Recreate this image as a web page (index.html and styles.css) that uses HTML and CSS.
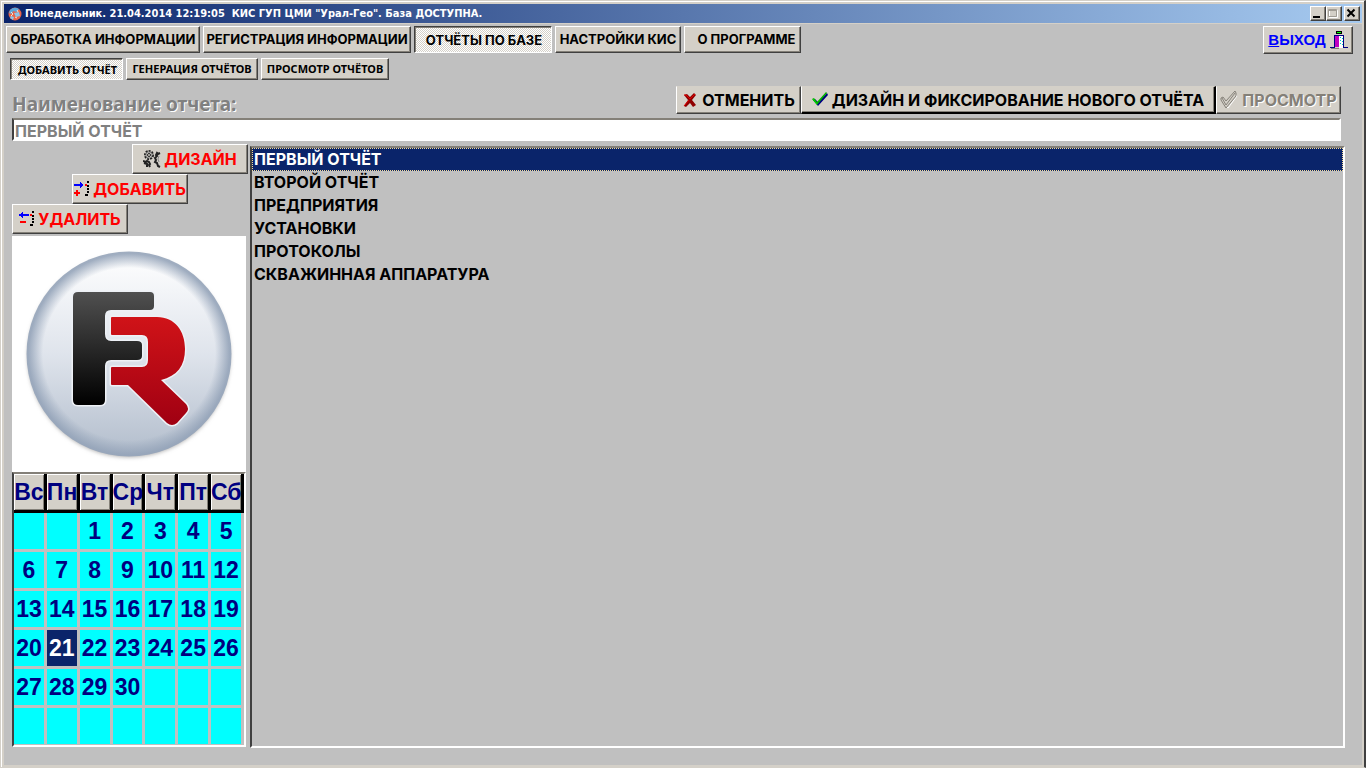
FILE: index.html
```html
<!DOCTYPE html>
<html lang="ru">
<head>
<meta charset="utf-8">
<title>КИС ГУП ЦМИ "Урал-Гео"</title>
<link rel="stylesheet" href="styles.css">
</head>
<body>
<div class="window">
  <header class="titlebar">
    <svg class="app-icon" viewBox="0 0 14 14" aria-hidden="true">
      <circle cx="7" cy="7" r="6.5" fill="#e8654a"/>
      <path d="M2 3Q6-1 11 2L9 5 5 4 4 7 1 6z" fill="#5ba8dc"/>
      <path d="M6 6l5-1 1 4-4 1zM3 9l3 1-1 3-3-2z" fill="#8cc4e8"/>
      <path d="M3 5l2 2-2 2M9 3l1 2M7 10l2 1" stroke="#ffe0c8" fill="none"/>
    </svg>
    <h1 class="title">Понедельник. 21.04.2014 12:19:05 &nbsp;КИС ГУП ЦМИ "Урал-Гео". База ДОСТУПНА.</h1>
    <div class="window-controls">
      <button class="win-btn" type="button" aria-label="Свернуть"><svg viewBox="0 0 12 11"><path d="M2 8h7v2H2z"/></svg></button>
      <button class="win-btn" type="button" aria-label="Развернуть" disabled><svg viewBox="0 0 12 11"><path d="M2.500 2.500h8v7h-8z" fill="none" stroke="#fff"/><path d="M1.500 1.500h8v7h-8zM1 2.500h9" fill="none" stroke="#a09c94"/></svg></button>
      <button class="win-btn win-close" type="button" aria-label="Закрыть"><svg viewBox="0 0 12 11"><path d="M2.500 1.500l7 7M9.500 1.500l-7 7" stroke="#000" stroke-width="2"/></svg></button>
    </div>
  </header>

  <main class="client">
    <nav class="main-nav">
      <button class="btn tab w-process" type="button">ОБРАБОТКА ИНФОРМАЦИИ</button>
      <button class="btn tab w-register" type="button">РЕГИСТРАЦИЯ ИНФОРМАЦИИ</button>
      <button class="btn tab pressed w-reports" type="button" aria-pressed="true">ОТЧЁТЫ ПО БАЗЕ</button>
      <button class="btn tab w-settings" type="button">НАСТРОЙКИ КИС</button>
      <button class="btn tab w-about" type="button">О ПРОГРАММЕ</button>
      <button class="btn exit" type="button"><span><u>В</u>ЫХОД</span>
        <svg class="door" viewBox="0 0 18 18" shape-rendering="crispEdges" aria-hidden="true">
          <path d="M6 0h6v3H6z" fill="#000"/><path d="M7 1h4v1H7z" fill="#0f0"/>
          <path d="M4 4h10v12H4z" fill="#000080"/><path d="M5 5h4v11H5z" fill="#c000c0"/>
          <path d="M9 5h4v12H9z" fill="#fff"/><path d="M10 6h1v1h-1zM12 7h1v1h-1zM10 9h1v1h-1zM12 10h1v1h-1zM10 12h1v1h-1zM12 13h1v1h-1z" fill="#0cc"/>
          <path d="M0 16h5v1H0zM13 16h5v1h-5z" fill="#000080"/><path d="M1 17h8v1H1z" fill="#848078"/>
        </svg>
      </button>
    </nav>

    <nav class="sub-nav">
      <button class="btn subtab pressed w-add" type="button" aria-pressed="true">ДОБАВИТЬ ОТЧЁТ</button>
      <button class="btn subtab w-generate" type="button">ГЕНЕРАЦИЯ ОТЧЁТОВ</button>
      <button class="btn subtab w-view" type="button">ПРОСМОТР ОТЧЁТОВ</button>
    </nav>

    <section class="name-form">
      <div class="name-row">
        <label class="name-label" for="report-name">Наименование отчета:</label>
        <button class="btn action w-side" type="button">
          <svg class="glyph" viewBox="0 0 16 16" aria-hidden="true"><path d="M2 3l3-1 3 3 4-4 2 2-4 5 4 5-3 2-3-4-4 4-2-1 4-6z" fill="#900000"/><path d="M2 3l2 0 4 4 5-5M2 14l5-6" fill="none" stroke="#e00000"/></svg>
          ОТМЕНИТЬ</button>
        <button class="btn action default w-design" type="button">
          <svg class="glyph" viewBox="0 0 16 16" aria-hidden="true"><path d="M1 8l2-1 3 3 9-9 1 2-10 11z" fill="#000080"/><path d="M0 7l2-1 3 4L14 0l1 1L5 13z" fill="#00b000"/><path d="M1 7l4 5" stroke="#00e000"/></svg>
          ДИЗАЙН И ФИКСИРОВАНИЕ НОВОГО ОТЧЁТА</button>
        <button class="btn action w-side" type="button" disabled>
          <svg class="glyph glyph-wide" viewBox="0 0 18 18" aria-hidden="true"><path d="M2 10l2-2 3 4 8-9 2 2L8 17z" fill="none" stroke="#fff"/><path d="M1 9V7l2-1 3 4 9-10 1 2v3L6 17z" fill="#d4d0c8" stroke="#848078"/><path d="M2 7l4 7L15 2" fill="none" stroke="#848078"/></svg>
          ПРОСМОТР</button>
      </div>
      <input class="name-input" id="report-name" type="text" value="ПЕРВЫЙ ОТЧЁТ" disabled>
    </section>

    <div class="workspace">
      <aside class="sidebar">
        <div class="stairs">
          <button class="btn step step-right" type="button">
            <svg class="glyph glyph-wide" viewBox="0 0 18 18" aria-hidden="true"><g fill="none" stroke="#222"><circle cx="6" cy="5" r="4" stroke-width="2" stroke-dasharray="2 1"/><circle cx="6" cy="5" r="1.500"/><circle cx="6" cy="5" r="3" stroke="#888"/><path d="M17 3l-2 1-1-1-1 2 1 1-2 2 1 2-1 2 2 1 1 3 2 1" stroke-width="2"/><path d="M16 6l-1 3 1 3" stroke="#888"/><path d="M0 11l3 1 1-1 2 1 1 2-1 1 1 2M1 13l3 1v3" stroke-width="2"/></g></svg>
            ДИЗАЙН</button>
          <button class="btn step step-middle" type="button">
            <svg class="glyph" viewBox="0 0 16 16" shape-rendering="crispEdges" aria-hidden="true"><path d="M0 3h6V1h1v1h1v1h1v2H8v1H7v1H6V5H0z" fill="#00f"/><path d="M2 9h2v2h2v2H4v2H2v-2H0v-2h2zM11 3h2v2h-2z" fill="red"/><path d="M13 0h2v2h-2zM13 4h2v2h-2zM13 7h2v2h-2zM13 10h2v2h-2zM11 13h3v2h-3z"/></svg>
            ДОБАВИТЬ</button>
          <button class="btn step" type="button">
            <svg class="glyph" viewBox="0 0 16 16" shape-rendering="crispEdges" aria-hidden="true"><path d="M10 3H4V1H3v1H2v1H0v2h2v1h1v1h1V5h6z" fill="#00f"/><path d="M1 10h6v2H1zM11 3h2v2h-2z" fill="red"/><path d="M13 0h2v2h-2zM13 4h2v2h-2zM13 7h2v2h-2zM13 10h2v2h-2zM11 13h3v2h-3z"/></svg>
            УДАЛИТЬ</button>
        </div>

        <svg class="logo" viewBox="0 0 234 236" role="img" aria-label="FastReport">
          <defs>
            <linearGradient id="glass" x1="0" y1="0" x2="0" y2="1"><stop offset="0" stop-color="#fff"/><stop offset=".5" stop-color="#dfe4ec"/><stop offset="1" stop-color="#b2bdcc"/></linearGradient>
            <radialGradient id="rim"><stop offset=".84" stop-color="#95a4b9" stop-opacity="0"/><stop offset=".98" stop-color="#95a4b9" stop-opacity=".9"/></radialGradient>
            <linearGradient id="ink" x1="0" y1="0" x2="0" y2="1"><stop offset="0" stop-color="#505050"/><stop offset="1" stop-color="#000"/></linearGradient>
            <linearGradient id="red" x1="0" y1="0" x2="0" y2="1"><stop offset="0" stop-color="#d01318"/><stop offset="1" stop-color="#a00012"/></linearGradient>
            <filter id="soft"><feGaussianBlur stdDeviation="2"/></filter>
          </defs>
          <circle cx="117" cy="120" r="101" fill="#a8a8a8" filter="url(#soft)"/>
          <circle cx="117" cy="118" r="102" fill="url(#glass)"/>
          <circle cx="117" cy="118" r="102.500" fill="url(#rim)"/>
          <g stroke="#eef1f6" stroke-width="3" paint-order="stroke">
            <path d="M66 56h72q4 0 4 4v10q0 4-4 4H99q-6 0-6 6v18q0 7 6 7h26q5 0 5 4v11q0 4-5 4H99q-6 0-6 6v34q0 5-5 5H66q-5 0-5-5V61q0-5 5-5z" fill="url(#ink)"/>
            <path d="M100 81h45c18 0 28 14 28 32 0 17-8 27-24 31l25 24q4 5 0 9l-9 10q-5 4-10 0l-39-38h-16q-1 0-1-1v-16q0-1 1-1h30q6 0 6-7v-18q0-7-6-7h-30q-1 0-1-1V82q0-1 1-1z" fill="url(#red)"/>
          </g>
        </svg>

        <table class="calendar">
          <thead><tr><th>Вс</th><th>Пн</th><th>Вт</th><th>Ср</th><th>Чт</th><th>Пт</th><th>Сб</th></tr></thead>
          <tbody>
            <tr><td></td><td></td><td>1</td><td>2</td><td>3</td><td>4</td><td>5</td></tr>
            <tr><td>6</td><td>7</td><td>8</td><td>9</td><td>10</td><td>11</td><td>12</td></tr>
            <tr><td>13</td><td>14</td><td>15</td><td>16</td><td>17</td><td>18</td><td>19</td></tr>
            <tr><td>20</td><td class="today">21</td><td>22</td><td>23</td><td>24</td><td>25</td><td>26</td></tr>
            <tr><td>27</td><td>28</td><td>29</td><td>30</td><td></td><td></td><td></td></tr>
            <tr><td></td><td></td><td></td><td></td><td></td><td></td><td></td></tr>
          </tbody>
        </table>
      </aside>

      <ul class="report-list" role="listbox" aria-label="Отчёты">
        <li class="report selected" role="option" aria-selected="true">ПЕРВЫЙ ОТЧЁТ</li>
        <li class="report" role="option">ВТОРОЙ ОТЧЁТ</li>
        <li class="report" role="option">ПРЕДПРИЯТИЯ</li>
        <li class="report" role="option">УСТАНОВКИ</li>
        <li class="report" role="option">ПРОТОКОЛЫ</li>
        <li class="report" role="option">СКВАЖИННАЯ АППАРАТУРА</li>
      </ul>
    </div>
  </main>
</div>
</body>
</html>
```
FILE: styles.css
```css
:root {
  --face: #d4d0c8;
  --shade: #848078;
  --dark: #404040;
  --panel: #c0c0c0;
  --navy: #0a246a;
  --hand: "Comic Sans MS", Inter, "Noto Sans", sans-serif;
  --ui: Tahoma, "Noto Sans", sans-serif;
}

* { box-sizing: border-box; }

body { margin: 0; }

.window {
  display: flex;
  flex-direction: column;
  min-height: 100vh;
  padding: 2px;
  background: var(--face);
  border: 1px solid var(--face);
  border-right: 2px solid var(--dark);
  box-shadow: inset 1px 1px #fff;
}

.titlebar {
  display: flex;
  align-items: center;
  height: 19px;
  margin: 1px 0 0 1px;
  padding: 0 2px 0 4px;
  background: linear-gradient(to right, #0a246a, #a6caf0);
}

.app-icon { width: 14px; height: 14px; margin-right: 3px; }

.title {
  flex: 1;
  margin: 0;
  color: #fff;
  font: bold 11px/19px Tahoma, "DejaVu Sans Condensed", sans-serif;
  white-space: nowrap;
}

.window-controls { display: flex; }

.win-btn {
  width: 16px;
  height: 15px;
  padding: 0;
  background: var(--face);
  border: 1px solid;
  border-color: #fff var(--dark) var(--dark) #fff;
  box-shadow: inset -1px -1px var(--shade);
}

.win-btn svg { display: block; width: 12px; height: 11px; }
.win-close { margin-left: 2px; }

.client {
  flex: 1;
  display: flex;
  flex-direction: column;
  margin: 1px 0 0 1px;
  padding: 2px 17px 17px 2px;
  background: var(--panel);
}

.btn {
  flex: none;
  display: flex;
  align-items: center;
  justify-content: center;
  padding: 0;
  color: #000;
  white-space: nowrap;
  background: var(--face);
  border: 1px solid;
  border-color: #fff var(--dark) var(--dark) #fff;
  box-shadow: inset -1px -1px var(--shade);
}

.pressed {
  padding: 2px 0 0 2px;
  background: repeating-conic-gradient(#fff 0 25%, var(--face) 0 50%) 0 0 / 2px 2px;
  border-color: var(--dark) #fff #fff var(--dark);
  box-shadow: inset 1px 1px var(--shade);
}

.main-nav { display: flex; gap: 3px; height: 27px; margin-right: -8px; }
.tab { padding-bottom: 1px; font: bold 13px/20px var(--hand); }
.w-process { width: 194px; }
.w-register { width: 208px; }
.w-reports { width: 138px; }
.w-settings { width: 126px; }
.w-about { width: 117px; padding-left: 8px; }

.exit {
  gap: 4px;
  width: 90px;
  height: 28px;
  margin-left: auto;
  color: #00f;
  font: bold 15px/20px Arial, "Liberation Sans", sans-serif;
}

.door { width: 18px; height: 18px; }

.sub-nav { display: flex; gap: 3px; height: 22px; margin: 5px 0 0 4px; }
.subtab { font: bold 11px/16px var(--ui); }
.w-add { width: 113px; }
.w-generate { width: 132px; }
.w-view { width: 128px; }

.name-form { margin: 6px 4px 0 6px; }
.name-row { display: flex; height: 28px; }

.name-label {
  flex: 1;
  color: #808080;
  font: bold 19px/36px var(--ui);
  text-shadow: 1px 1px #fff;
}

.action { gap: 4px; border-top-color: var(--face); font: bold 16px/20px var(--hand); }
.action:disabled { color: #848078; text-shadow: 1px 1px #fff; }
.default { border-right: 2px solid #000; border-bottom: 2px solid #000; }
.w-side { width: 125px; }
.w-design { width: 415px; }

.glyph { flex: none; width: 16px; height: 16px; }
.glyph-wide { width: 18px; height: 18px; }

.name-input {
  display: block;
  width: 100%;
  height: 23px;
  margin-top: 4px;
  padding: 3px 1px 0;
  color: #808080;
  font: bold 16px/18px var(--hand);
  background: #fff;
  border: 2px solid;
  border-color: var(--shade) #fff #fff var(--dark);
  border-radius: 0;
}

.workspace { flex: 1; display: flex; gap: 2px; margin: 3px 0 0 6px; }
.sidebar { flex: none; width: 236px; }
.stairs { display: flex; flex-direction: column; }

.step {
  gap: 3px;
  width: 116px;
  height: 30px;
  color: #f00;
  font: bold 16px/20px var(--hand);
}

.step-middle { margin-left: 60px; }
.step-right { align-self: flex-end; }

.logo { display: block; width: 234px; height: 236px; margin-top: 2px; background: #fff; }

.calendar {
  width: 234px;
  table-layout: fixed;
  border-spacing: 0;
  border: 2px solid;
  border-color: var(--shade) #fff #fff var(--dark);
  color: #000080;
  font: bold 23px/36px Arial, "Liberation Sans", sans-serif;
}

.calendar th {
  height: 39px;
  padding: 0;
  background: var(--face);
  border: solid #000;
  border-width: 0 3px 3px 0;
  box-shadow: inset 1px 1px #fff, inset -1px -1px var(--shade);
}

.calendar td {
  height: 39px;
  padding: 0;
  text-align: center;
  background: #0ff;
  border: solid var(--panel);
  border-width: 0 3px 3px 0;
}

.calendar tr:last-child td { height: 37px; border-bottom-width: 1px; }
.calendar .today { color: #fff; background: var(--navy); background-clip: padding-box; }

.report-list {
  flex: 1;
  margin: 2px 0 0;
  padding: 0;
  list-style: none;
  border: 2px solid;
  border-color: var(--shade) #fff #fff var(--dark);
  color: #000;
  font: bold 16px/23px var(--hand);
}

.report { padding: 0 2px; }
.selected { color: #fff; background: var(--navy); outline: 1px dotted #f5db95; outline-offset: -1px; }
```
